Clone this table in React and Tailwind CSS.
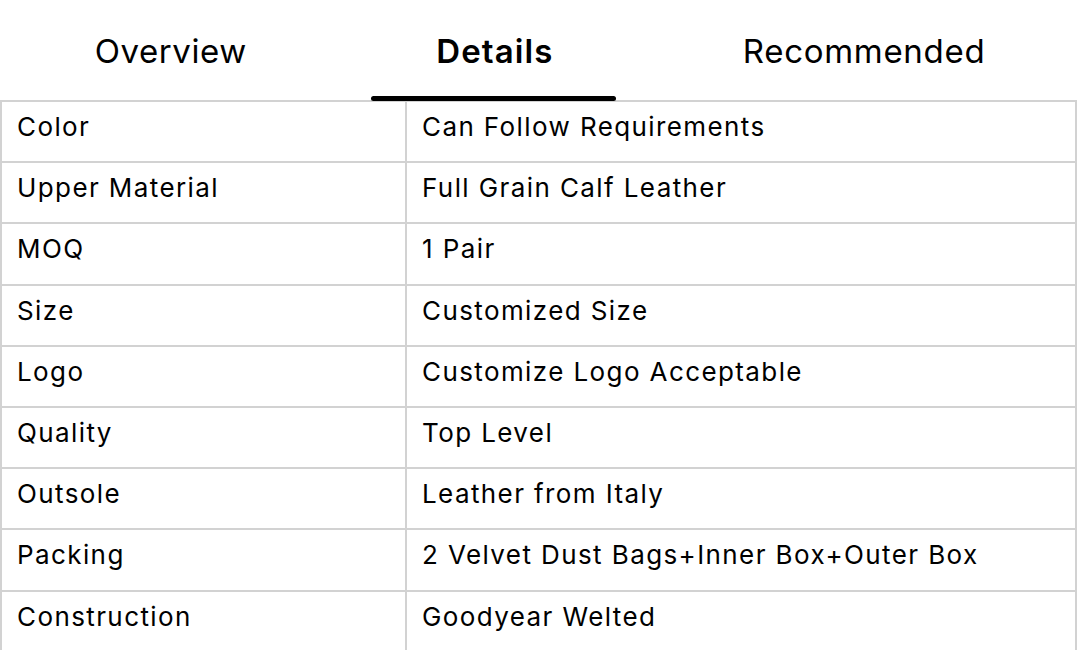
import React from "react";

const rows = [
  ["Color", "Can Follow Requirements"],
  ["Upper Material", "Full Grain Calf Leather"],
  ["MOQ", "1 Pair"],
  ["Size", "Customized Size"],
  ["Logo", "Customize Logo Acceptable"],
  ["Quality", "Top Level"],
  ["Outsole", "Leather from Italy"],
  ["Packing", "2 Velvet Dust Bags+Inner Box+Outer Box"],
  ["Construction", "Goodyear Welted"],
];

export default function App() {
  return (
    <div
      className="w-[1080px] h-[650px] overflow-hidden bg-white text-black"
      style={{ fontFamily: "Inter, 'Noto Sans', sans-serif" }}
    >
      <div className="h-[100px] flex justify-around items-start pt-[30px]">
        <div className="text-[33px] leading-[42px] tracking-[0.6px]">Overview</div>
        <div className="relative text-[33px] leading-[42px] font-semibold tracking-[1.1px]">
          Details
          <div className="absolute -left-[65px] -right-[63px] top-[66px] h-[5px] rounded-full bg-black" />
        </div>
        <div className="text-[33px] leading-[42px] tracking-[0.7px]">Recommended</div>
      </div>
      <div className="w-[1077px] border-l-2 border-r-2 border-t-2 border-[#d2d2d2]">
        {rows.map(([k, v]) => (
          <div
            key={k}
            className="grid grid-cols-[405px_1fr] h-[61.2px] border-b-2 border-[#d2d2d2]"
          >
            <div className="border-r-2 border-[#d2d2d2] pl-[15px] pt-[9px] text-[26px] leading-[32px] tracking-[1.4px]">
              {k}
            </div>
            <div className="pl-[15px] pt-[9px] text-[26px] leading-[32px] tracking-[1.4px]">
              {v}
            </div>
          </div>
        ))}
      </div>
    </div>
  );
}
